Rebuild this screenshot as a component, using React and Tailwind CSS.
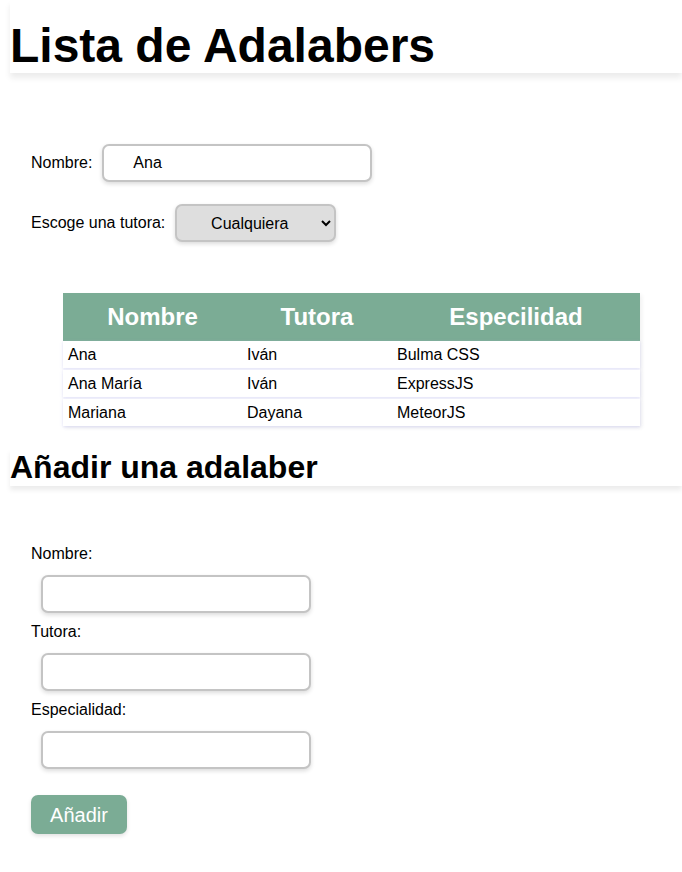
import React, { useState } from 'react';

const adalabers = [
  { name: 'Ana', tutor: 'Iván', speciality: 'Bulma CSS' },
  { name: 'Ana María', tutor: 'Iván', speciality: 'ExpressJS' },
  { name: 'Mariana', tutor: 'Dayana', speciality: 'MeteorJS' },
];

const inputClass =
  'h-[38px] w-[270px] rounded-[7px] border-2 border-[#c4c4c4] bg-white px-[29px] text-[16px] text-black outline-none shadow-[0_2px_4px_rgba(0,0,0,0.14)]';

const App = () => {
  const [search, setSearch] = useState('Ana');
  const [tutor, setTutor] = useState('');

  return (
    <div className="min-h-screen bg-white pb-[38px] font-['Liberation_Sans',Arial,sans-serif] text-black">
      <h1 className="ml-[10px] pt-[18px] text-[48px] font-bold leading-[55px] shadow-[0_5px_6px_rgba(0,0,0,0.08)]">
        Lista de Adalabers
      </h1>

      <form className="pl-[31px] pt-[71px]" onSubmit={(e) => e.preventDefault()}>
        <div className="flex items-center gap-[10px]">
          <label htmlFor="search" className="text-[16px]">Nombre:</label>
          <input
            id="search"
            type="text"
            className={inputClass}
            value={search}
            onChange={(e) => setSearch(e.target.value)}
          />
        </div>
        <div className="mt-[22px] flex items-center gap-[10px]">
          <label htmlFor="tutor" className="text-[16px]">Escoge una tutora:</label>
          <select
            id="tutor"
            className="h-[38px] w-[161px] rounded-[7px] border-2 border-[#c4c4c4] bg-[#dedede] pl-[4px] pr-[4px] text-center text-[16px] text-black shadow-[0_2px_4px_rgba(0,0,0,0.14)]"
            value={tutor}
            onChange={(e) => setTutor(e.target.value)}
          >
            <option value="">Cualquiera</option>
            <option value="Iván">Iván</option>
            <option value="Dayana">Dayana</option>
          </select>
        </div>
      </form>

      <div className="ml-[63px] mt-[51px] w-[577px] shadow-[2px_2px_4px_rgba(0,0,0,0.06)]">
        <div className="grid h-[48px] grid-cols-[179px_150px_248px] items-center bg-[#7bac95] text-center text-[24px] font-bold text-white">
          <div>Nombre</div>
          <div>Tutora</div>
          <div>Especilidad</div>
        </div>
        {adalabers.map((item) => (
          <div
            key={item.name}
            className="mb-[2px] grid h-[27px] grid-cols-[179px_150px_248px] items-center bg-white text-[16px] shadow-[0_1px_3px_rgba(185,185,235,0.45)] last:mb-0"
          >
            <div className="pl-[5px]">{item.name}</div>
            <div className="pl-[5px]">{item.tutor}</div>
            <div className="pl-[5px]">{item.speciality}</div>
          </div>
        ))}
      </div>

      <h2 className="ml-[10px] mt-[23px] text-[32px] font-bold leading-[37px] shadow-[0_4px_5px_rgba(0,0,0,0.08)]">
        Añadir una adalaber
      </h2>

      <form className="pl-[31px] pt-[59px]" onSubmit={(e) => e.preventDefault()}>
        <label htmlFor="new-name" className="block text-[16px] leading-[18px]">Nombre:</label>
        <input id="new-name" type="text" className={`${inputClass} ml-[10px] mt-[12px] block`} />
        <label htmlFor="new-tutor" className="mt-[10px] block text-[16px] leading-[18px]">Tutora:</label>
        <input id="new-tutor" type="text" className={`${inputClass} ml-[10px] mt-[12px] block`} />
        <label htmlFor="new-speciality" className="mt-[10px] block text-[16px] leading-[18px]">Especialidad:</label>
        <input id="new-speciality" type="text" className={`${inputClass} ml-[10px] mt-[12px] block`} />
        <button
          type="submit"
          className="mt-[26px] h-[39px] w-[96px] rounded-[7px] bg-[#7bac95] text-[20px] text-white shadow-[0_2px_4px_rgba(0,0,0,0.12)]"
        >
          Añadir
        </button>
      </form>
    </div>
  );
};

export default App;
